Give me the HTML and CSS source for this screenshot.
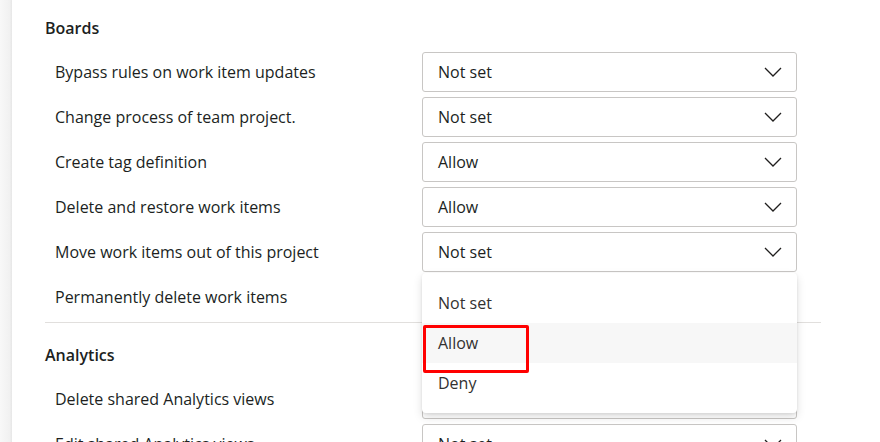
FILE: index.html
```html
<!DOCTYPE html>
<html>
<head>
<meta charset="utf-8">
<link rel="stylesheet" href="styles.css">
</head>
<body>
<div class="edge"></div>
<main class="content">
  <section class="group">
    <h2 class="group-title">Boards</h2>
    <div class="row"><span class="label">Bypass rules on work item updates</span><div class="select">Not set<svg class="chev" viewBox="0 0 18 10"><polyline points="1,1 9,9 17,1"/></svg></div></div>
    <div class="row"><span class="label">Change process of team project.</span><div class="select">Not set<svg class="chev" viewBox="0 0 18 10"><polyline points="1,1 9,9 17,1"/></svg></div></div>
    <div class="row"><span class="label">Create tag definition</span><div class="select">Allow<svg class="chev" viewBox="0 0 18 10"><polyline points="1,1 9,9 17,1"/></svg></div></div>
    <div class="row"><span class="label">Delete and restore work items</span><div class="select">Allow<svg class="chev" viewBox="0 0 18 10"><polyline points="1,1 9,9 17,1"/></svg></div></div>
    <div class="row"><span class="label">Move work items out of this project</span>
      <div class="select open">Not set<svg class="chev" viewBox="0 0 18 10"><polyline points="1,1 9,9 17,1"/></svg>
        <ul class="menu">
          <li class="opt">Not set</li>
          <li class="opt hover">Allow<span class="mark"></span></li>
          <li class="opt">Deny</li>
        </ul>
      </div>
    </div>
    <div class="row"><span class="label">Permanently delete work items</span><div class="select">Not set<svg class="chev" viewBox="0 0 18 10"><polyline points="1,1 9,9 17,1"/></svg></div></div>
  </section>
  <hr class="divider">
  <section class="group">
    <h2 class="group-title">Analytics</h2>
    <div class="row"><span class="label">Delete shared Analytics views</span><div class="select">Not set<svg class="chev" viewBox="0 0 18 10"><polyline points="1,1 9,9 17,1"/></svg></div></div>
    <div class="row"><span class="label">Edit shared Analytics views</span><div class="select">Not set<svg class="chev" viewBox="0 0 18 10"><polyline points="1,1 9,9 17,1"/></svg></div></div>
  </section>
</main>
</body>
</html>
```
FILE: styles.css
```css
html, body {
  margin: 0;
  padding: 0;
  height: 100%;
  overflow: hidden;
  background: #fff;
}
body {
  display: flex;
  font-family: "Open Sans", "Noto Sans", sans-serif;
  color: #201f1e;
}
.edge {
  width: 12px;
  flex: none;
  background: linear-gradient(to right, #f8f8f8, #f1f1f1 80%, #e6e6e6);
}
.content {
  flex: 1;
  padding: 17px 0 0 33px;
}
.group-title {
  margin: 0 0 13px 0;
  font-size: 16px;
  font-weight: 600;
  line-height: 22px;
  color: #201f1e;
}
.row {
  display: flex;
  align-items: center;
  height: 40px;
  margin-bottom: 5px;
  padding-left: 10px;
  width: 742px;
}
.label {
  flex: 1;
  font-size: 16px;
  color: #201f1e;
}
.select {
  position: relative;
  box-sizing: border-box;
  width: 375px;
  height: 40px;
  border: 1px solid #c8c6c4;
  border-radius: 3px;
  display: flex;
  align-items: center;
  justify-content: space-between;
  padding: 0 14px 0 15px;
  font-size: 16px;
  color: #201f1e;
  background: #fff;
}
.chev {
  width: 18px;
  height: 10px;
  fill: none;
  stroke: #201f1e;
  stroke-width: 1.3;
}
.divider {
  border: 0;
  border-top: 1px solid #e1dfdd;
  margin: 0 0 21px 0;
  width: 776px;
}
.menu {
  position: absolute;
  left: -1px;
  top: 40px;
  width: 375px;
  margin: 0;
  padding: 10px 0 10px 0;
  list-style: none;
  background: #fff;
  border-radius: 4px;
  box-shadow: 0 4px 10px rgba(0,0,0,0.13), 0 1px 3px rgba(0,0,0,0.08);
  z-index: 5;
}
.opt {
  position: relative;
  height: 40px;
  line-height: 40px;
  padding-left: 16px;
  font-size: 16px;
  color: #323130;
}
.opt.hover { background: #f7f7f7; }
.mark {
  position: absolute;
  left: 1px;
  top: 2px;
  width: 100px;
  height: 42px;
  border: 3px solid #f00;
  border-radius: 2px;
}
```
